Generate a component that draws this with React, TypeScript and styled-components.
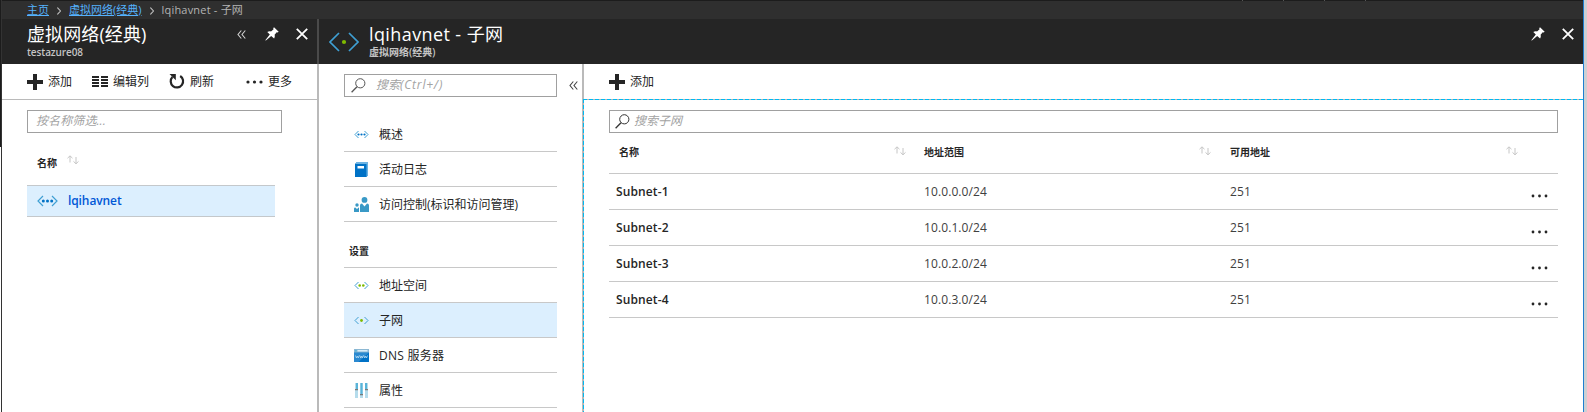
import React from "react";
import styled, { createGlobalStyle } from "styled-components";

const Global = createGlobalStyle`
  * { box-sizing: border-box; }
  body { margin: 0; background: #fff; overflow: hidden; }
  #root { height: 412px; }
`;

const Page = styled.div`
  width: 1587px;
  height: 412px;
  display: flex;
  font-family: "Open Sans", "Noto Sans CJK SC", sans-serif;
  font-size: 12px;
  color: #252525;
  overflow: hidden;
`;

const LeftEdge = styled.div`
  width: 2px;
  flex: none;
  border-right: 1px solid #333;
  background: linear-gradient(#1c1c1c 147px, #fff 147px);
`;

const RightEdge = styled.div`
  width: 4px;
  flex: none;
  border-left: 1px solid #1f7fd0;
  background: #cdd0d4;
`;

const Portal = styled.div`
  flex: 1;
  min-width: 0;
  display: flex;
  flex-direction: column;
`;

const TopBar = styled.div`
  height: 1px;
  flex: none;
  background: #1c1c1c;
  display: flex;
  justify-content: flex-end;
  gap: 40px;
  padding-right: 217px;
`;

const Tick = styled.span`
  width: 1px;
  background: #555;
`;

const Crumbs = styled.nav`
  height: 18px;
  flex: none;
  display: flex;
  align-items: center;
  padding-left: 25px;
  background: #2f2f2f;
  color: #b4b4b4;
  font-size: 11px;
  line-height: 18px;
  white-space: nowrap;
`;

const CrumbLink = styled.a`
  color: #55b3ff;
  text-decoration: underline;
  text-underline-offset: 1px;
`;

const CrumbCurrent = styled.span`
  letter-spacing: 0.2px;
`;

const CrumbArrow = styled.svg`
  width: 4px;
  height: 8px;
  margin: 1px 8px 0;
`;

const Blades = styled.div`
  flex: 1;
  display: flex;
  min-height: 0;
`;

const Blade = styled.section<{ $w?: number }>`
  ${(p) => (p.$w ? `width: ${p.$w}px; flex: none;` : "flex: 1; min-width: 0;")}
  display: flex;
  flex-direction: column;
`;

const BladeHead = styled.header<{ $divided?: boolean; $left: number }>`
  height: 45px;
  flex: none;
  display: flex;
  background: #252525;
  color: #fff;
  padding-left: ${(p) => p.$left}px;
  border-right: ${(p) => (p.$divided ? "2px solid #4a4a4a" : "0")};
`;

const HeadIcon = styled.div`
  width: 40px;
  padding-top: 13px;
  svg { display: block; }
`;

const Titles = styled.div`
  flex: 1;
  white-space: nowrap;
`;

const Title = styled.h1<{ $ls?: number }>`
  margin: 3px 0 0;
  font-size: 18px;
  font-weight: 400;
  line-height: 24px;
  letter-spacing: ${(p) => p.$ls ?? 0}px;
`;

const Subtitle = styled.div<{ $ls?: number }>`
  font-size: 10px;
  line-height: 12px;
  color: #c4c4c4;
  font-weight: 600;
  letter-spacing: ${(p) => p.$ls ?? 0}px;
`;

const HeadActions = styled.div<{ $right: number }>`
  display: flex;
  height: 30px;
  align-items: center;
  padding-right: ${(p) => p.$right}px;
  svg { display: block; }
`;

const Gap = styled.span<{ $w: number }>`
  width: ${(p) => p.$w}px;
  flex: none;
`;

const BladeBody = styled.div<{ $divided?: boolean }>`
  flex: 1;
  min-height: 0;
  background: #fff;
  border-right: ${(p) => (p.$divided ? "2px solid #bababa" : "0")};
`;

const Toolbar = styled.div<{ $line?: boolean }>`
  height: ${(p) => (p.$line ? 36 : 35)}px;
  display: flex;
  align-items: center;
  padding-left: 25px;
  border-bottom: ${(p) => (p.$line ? "1px solid #bababa" : "0")};
  line-height: 18px;
  white-space: nowrap;
  svg { display: block; flex: none; }
`;

const ToolText = styled.span<{ $l: number; $r?: number }>`
  margin: 0 ${(p) => p.$r ?? 0}px 0 ${(p) => p.$l}px;
`;

const InputBox = styled.div<{ $w: number; $pad: number; $gap?: number; $ls?: number }>`
  width: ${(p) => p.$w}px;
  height: 23px;
  flex: none;
  border: 1px solid #a0a0a0;
  display: flex;
  align-items: center;
  padding-left: ${(p) => p.$pad}px;
  gap: ${(p) => p.$gap ?? 0}px;
  color: #a3a3a3;
  font-style: italic;
  line-height: 20px;
  padding-bottom: 1px;
  letter-spacing: ${(p) => p.$ls ?? 0}px;
  white-space: nowrap;
`;

const Latin = styled.span<{ $ls: number }>`
  letter-spacing: ${(p) => p.$ls}px;
`;

const NetworkPane = styled.div`
  padding: 10px 0 0 25px;
`;

const NameHead = styled.div`
  display: flex;
  height: 52px;
  align-items: center;
  gap: 10px;
  padding: 6px 0 0 10px;
  font-size: 10px;
  font-weight: 600;
  svg { margin-top: -4px; }
`;

const NetworkRow = styled.div`
  width: 248px;
  height: 32px;
  display: flex;
  align-items: center;
  gap: 10px;
  padding-left: 10px;
  background: #dceffe;
  border: solid #c4c8cb;
  border-width: 1px 0;
  color: #0058d6;
  font-weight: 600;
  letter-spacing: -0.1px;
`;

const NetworkName = styled.span`
  padding-bottom: 2px;
`;

const MenuSearch = styled.div`
  display: flex;
  align-items: center;
  gap: 12px;
  padding: 10px 0 20px 25px;
`;

const Menu = styled.div`
  width: 213px;
  margin-left: 25px;
`;

const MenuItem = styled.div<{ $on?: boolean; $ls?: number }>`
  height: 35px;
  display: flex;
  align-items: center;
  gap: 10px;
  padding-left: 10px;
  border-bottom: 1px solid #c8c8c8;
  background: ${(p) => (p.$on ? "#dceffe" : "transparent")};
  letter-spacing: ${(p) => p.$ls ?? 0}px;
  white-space: nowrap;
`;

const MenuGroup = styled.div`
  height: 46px;
  padding: 21px 0 0 5px;
  border-bottom: 1px solid #c8c8c8;
  font-size: 10px;
  line-height: 16px;
  font-weight: 600;
`;

const Content = styled.div`
  height: 313px;
  margin-left: -1px;
  padding: 11px 0 0 26px;
  background:
    repeating-linear-gradient(90deg, #00b9f2 0 4px, #b4b4b4 4px 6px) 0 0 / 100% 1px no-repeat,
    repeating-linear-gradient(180deg, #00b9f2 0 4px, #b4b4b4 4px 6px) 0 0 / 1px 100% no-repeat;
  position: relative;
`;

const Grid = styled.div`
  width: 949px;
`;

const GridHead = styled.div`
  display: grid;
  grid-template-columns: 305px 306px 1fr;
  height: 41px;
  padding-left: 10px;
  border-bottom: 1px solid #c8c8c8;
  font-size: 10px;
  font-weight: 600;
`;

const HeadCell = styled.div<{ $r: number }>`
  display: flex;
  justify-content: space-between;
  padding: 11px ${(p) => p.$r}px 0 0;
  line-height: 16px;
  svg { margin-top: 2px; }
`;

const GridRow = styled.div`
  display: grid;
  grid-template-columns: 308px 306px 1fr 27px;
  height: 36px;
  align-items: center;
  padding-left: 7px;
  border-bottom: 1px solid #c8c8c8;
`;

const SubnetName = styled.span`
  font-weight: 600;
  letter-spacing: 0.12px;
`;

const Cell = styled.span`
  color: #404040;
  letter-spacing: 0.1px;
`;

const RowDots = styled.svg`
  margin-top: 8px;
`;

type NetProps = { w: number; h: number; dots: number; color: string; sw?: number; r?: number };

const NetIcon = ({ w, h, dots, color, sw = 1.2, r = 1.2 }: NetProps) => {
  const mid = h / 2;
  const arm = h / 2 - 1;
  const step = dots === 3 ? w * 0.2 : w * 0.24;
  return (
    <svg width={w} height={h} viewBox={`0 0 ${w} ${h}`} fill="none">
      <path
        d={`M${arm + 1} 1L1 ${mid}L${arm + 1} ${h - 1}M${w - arm - 1} 1L${w - 1} ${mid}L${w - arm - 1} ${h - 1}`}
        stroke="#3f9fd3"
        strokeWidth={sw}
      />
      {Array.from({ length: dots }, (_, i) => (
        <circle key={i} cx={w / 2 + (i - (dots - 1) / 2) * step} cy={mid} r={r} fill={color} />
      ))}
    </svg>
  );
};

const Plus = () => (
  <svg width="16" height="16" viewBox="0 0 16 16">
    <path d="M6 0h4v6h6v4h-6v6H6v-6H0V6h6z" fill="#252525" />
  </svg>
);

const Columns = () => (
  <svg width="16" height="11" viewBox="0 0 16 11" fill="#252525">
    <path d="M0 0h7v2H0zM9 0h7v2H9zM0 3h7v2H0zM9 3h7v2H9zM0 6h7v2H0zM9 6h7v2H9zM0 9h7v2H0zM9 9h7v2H9z" />
  </svg>
);

const Refresh = () => (
  <svg width="16" height="17" viewBox="0 0 16 17" fill="none">
    <path d="M11.2 3A6.2 6.2 0 1 1 3.4 4" stroke="#252525" strokeWidth="2.2" />
    <path d="M0.5 1H6.8V7.2Z" fill="#252525" />
  </svg>
);

const Dots = () => (
  <svg width="17" height="4" viewBox="0 0 17 4" fill="#252525">
    <circle cx="2" cy="2" r="1.6" />
    <circle cx="8.5" cy="2" r="1.6" />
    <circle cx="15" cy="2" r="1.6" />
  </svg>
);

const Chevrons = ({ color }: { color: string }) => (
  <svg width="9" height="9" viewBox="0 0 9 9" fill="none" stroke={color} strokeWidth="1.1">
    <path d="M4.3 0.5L1 4.5L4.3 8.5M8.3 0.5L5 4.5L8.3 8.5" />
  </svg>
);

const Pin = () => (
  <svg width="14" height="14" viewBox="0 0 14 14" fill="#fff">
    <path d="M9 0.3L13.7 4.8L12.6 5.6L11.7 5.3L9.6 7.7C10 9 9.8 10.3 9.1 11.4L6.2 8.9L0.9 13.6L0.3 13.2L4.8 7.6L2.3 5C3.4 4.3 4.8 4.1 6 4.5L8.6 2.3L8.2 1.3Z" />
  </svg>
);

const Close = () => (
  <svg width="12" height="12" viewBox="0 0 12 12" stroke="#fff" strokeWidth="1.8">
    <path d="M0.8 0.8L11.2 11.2M11.2 0.8L0.8 11.2" />
  </svg>
);

const Search = ({ color }: { color: string }) => (
  <svg width="15" height="15" viewBox="0 0 15 15" fill="none" stroke={color} strokeWidth="1">
    <circle cx="9.3" cy="5.3" r="4.6" />
    <path d="M6 8.8L0.6 14.3" strokeWidth="1.3" />
  </svg>
);

const Sort = () => (
  <svg width="12" height="10" viewBox="0 0 12 10" fill="none" stroke="#c6c6c6">
    <path d="M3 7.5V1M0.5 3.2L3 0.8L5.5 3.2M9 2V8.8M6.5 6.4L9 8.8L11.5 6.4" />
  </svg>
);

const Book = () => (
  <svg width="15" height="15" viewBox="0 0 15 15">
    <path d="M1 2L3 0H14V13L12.5 15H1Z" fill="#0072c6" />
    <path d="M1 2L3 0H14L12.5 2ZM12.5 2L14 0V13L12.5 15Z" fill="#6db3e2" />
    <path d="M3.5 4H10V6.5H3.5Z" fill="#fff" />
  </svg>
);

const People = () => (
  <svg width="15" height="15" viewBox="0 0 15 15" fill="#3999c6">
    <circle cx="10.5" cy="2.9" r="2.9" />
    <path d="M6 15V8.5Q6 6.5 8 6.5L10.5 9.5L13 6.5Q15 6.5 15 8.5V15Z" />
    <circle cx="3" cy="8" r="1.7" />
    <path d="M0 15V11.8Q0 10.5 1.3 10.5L3 12L5 10.3V15Z" />
  </svg>
);

const Www = () => (
  <svg width="15" height="13" viewBox="0 0 15 13">
    <rect width="15" height="13" rx="0.5" fill="#0072c6" />
    <path d="M0 3.5H15L4.5 13H0Z" fill="#2a89d0" />
    <path d="M0 0H15V3.5H0Z" fill="#8cb8d3" />
    <path d="M3.5 1H13.5V2.5H3.5Z" fill="#d8edf8" />
    <circle cx="1.8" cy="1.8" r="1" fill="#59b4d9" />
    <path
      d="M1.5 6.5L2.5 9L3.4 7L4.3 9L5.3 6.5M5.8 6.5L6.7 9L7.5 7L8.4 9L9.3 6.5M9.8 6.5L10.7 9L11.6 7L12.5 9L13.5 6.5"
      fill="none"
      stroke="#b9dcf3"
      strokeWidth="0.8"
    />
  </svg>
);

const Sliders = () => (
  <svg width="15" height="15" viewBox="0 0 15 15">
    <path d="M1 0H4V15H1ZM6 0H9V15H6ZM11 0H14V15H11Z" fill="#b5dcec" />
    <path d="M2 0H4V6H2ZM6.5 0H8.5V11H6.5ZM11 0H13V6H11Z" fill="#59b4d9" />
    <path d="M1 6H4V7.2H1ZM6 11H9V12.2H6ZM11 6H14V7.2H11Z" fill="#7a7a7a" />
  </svg>
);

const subnets = [
  { name: "Subnet-1", range: "10.0.0.0/24", free: 251 },
  { name: "Subnet-2", range: "10.0.1.0/24", free: 251 },
  { name: "Subnet-3", range: "10.0.2.0/24", free: 251 },
  { name: "Subnet-4", range: "10.0.3.0/24", free: 251 },
];

const Arrow = () => (
  <CrumbArrow viewBox="0 0 4 8" fill="none" stroke="#c0c0c0" strokeWidth="1.1">
    <path d="M0.4 0.5L3.5 4L0.4 7.5" />
  </CrumbArrow>
);

export default function App() {
  return (
    <Page>
      <Global />
      <LeftEdge />
      <Portal>
        <TopBar>
          <Tick /><Tick /><Tick /><Tick />
        </TopBar>
        <Crumbs>
          <CrumbLink>主页</CrumbLink>
          <Arrow />
          <CrumbLink>虚拟网络(经典)</CrumbLink>
          <Arrow />
          <CrumbCurrent>lqihavnet - 子网</CrumbCurrent>
        </Crumbs>
        <Blades>
          <Blade $w={317}>
            <BladeHead $left={25} $divided>
              <Titles>
                <Title $ls={0.1}>虚拟网络(经典)</Title>
                <Subtitle $ls={-0.1}>testazure08</Subtitle>
              </Titles>
              <HeadActions $right={9}>
                <Chevrons color="#d0d0d0" />
                <Gap $w={19} />
                <Pin />
                <Gap $w={17} />
                <Close />
              </HeadActions>
            </BladeHead>
            <BladeBody $divided>
              <Toolbar $line>
                <Plus />
                <ToolText $l={5} $r={20}>添加</ToolText>
                <Columns />
                <ToolText $l={5} $r={20}>编辑列</ToolText>
                <Refresh />
                <ToolText $l={5} $r={32}>刷新</ToolText>
                <Dots />
                <ToolText $l={5}>更多</ToolText>
              </Toolbar>
              <NetworkPane>
                <InputBox $w={255} $pad={8} $ls={0.1}>按名称筛选...</InputBox>
                <NameHead>
                  名称
                  <Sort />
                </NameHead>
                <NetworkRow>
                  <NetIcon w={21} h={12} dots={3} color="#0072c6" r={1.5} />
                  <NetworkName>lqihavnet</NetworkName>
                </NetworkRow>
              </NetworkPane>
            </BladeBody>
          </Blade>
          <Blade $w={265}>
            <BladeHead $left={10}>
              <HeadIcon>
                <NetIcon w={30} h={20} dots={1} color="#7fba00" sw={1.7} r={2.1} />
              </HeadIcon>
              <Titles>
                <Title $ls={0.4}>lqihavnet - 子网</Title>
                <Subtitle>虚拟网络(经典)</Subtitle>
              </Titles>
            </BladeHead>
            <BladeBody $divided>
              <MenuSearch>
                <InputBox $w={213} $pad={6} $gap={10}>
                  <Search color="#555" />
                  <span>搜索<Latin $ls={0.8}>(Ctrl+/)</Latin></span>
                </InputBox>
                <Chevrons color="#444" />
              </MenuSearch>
              <Menu>
                <MenuItem><NetIcon w={15} h={9} dots={3} color="#0072c6" sw={1} r={1.1} />概述</MenuItem>
                <MenuItem><Book />活动日志</MenuItem>
                <MenuItem><People />访问控制(标识和访问管理)</MenuItem>
                <MenuGroup>设置</MenuGroup>
                <MenuItem><NetIcon w={15} h={9} dots={2} color="#7fba00" sw={1} r={1.3} />地址空间</MenuItem>
                <MenuItem $on><NetIcon w={15} h={9} dots={1} color="#7fba00" sw={1} r={1.4} />子网</MenuItem>
                <MenuItem $ls={0.25}><Www />DNS 服务器</MenuItem>
                <MenuItem><Sliders />属性</MenuItem>
              </Menu>
            </BladeBody>
          </Blade>
          <Blade>
            <BladeHead $left={0}>
              <Titles />
              <HeadActions $right={9}>
                <Pin />
                <Gap $w={17} />
                <Close />
              </HeadActions>
            </BladeHead>
            <BladeBody>
              <Toolbar>
                <Plus />
                <ToolText $l={5}>添加</ToolText>
              </Toolbar>
              <Content>
                <InputBox $w={949} $pad={5} $gap={4}>
                  <Search color="#333" />
                  搜索子网
                </InputBox>
                <Grid>
                  <GridHead>
                    <HeadCell $r={18}>名称<Sort /></HeadCell>
                    <HeadCell $r={19}>地址范围<Sort /></HeadCell>
                    <HeadCell $r={40}>可用地址<Sort /></HeadCell>
                  </GridHead>
                  {subnets.map((s) => (
                    <GridRow key={s.name}>
                      <SubnetName>{s.name}</SubnetName>
                      <Cell>{s.range}</Cell>
                      <Cell>{s.free}</Cell>
                      <RowDots width="17" height="4" viewBox="0 0 17 4" fill="#252525">
                        <circle cx="2" cy="2" r="1.4" />
                        <circle cx="8.5" cy="2" r="1.4" />
                        <circle cx="15" cy="2" r="1.4" />
                      </RowDots>
                    </GridRow>
                  ))}
                </Grid>
              </Content>
            </BladeBody>
          </Blade>
        </Blades>
      </Portal>
      <RightEdge />
    </Page>
  );
}
